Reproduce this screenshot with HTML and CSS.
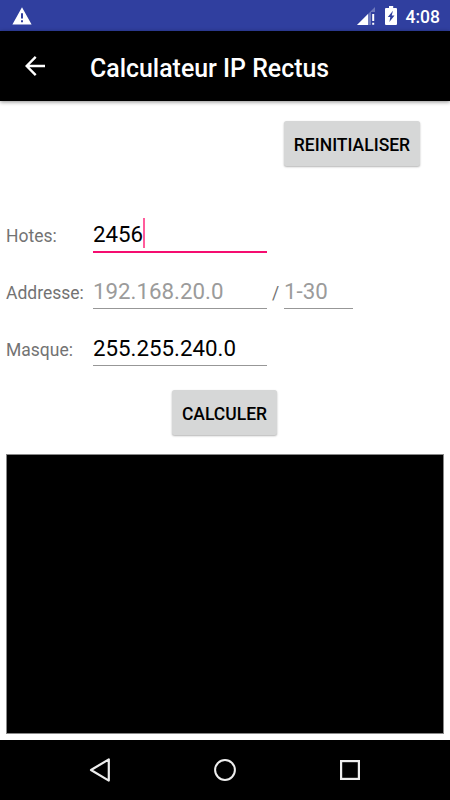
FILE: index.html
```html
<!DOCTYPE html>
<html lang="fr">
<head>
  <meta charset="UTF-8">
  <meta name="viewport" content="width=device-width, initial-scale=1.0">
  <title>Calculateur IP Rectus</title>
  <link rel="stylesheet" href="styles.css">
</head>
<body>
  <div class="statusbar">
    <svg class="warn" width="20" height="18" viewBox="0 0 20 18">
      <path fill="#fff" fill-rule="evenodd" d="M10 0.3 L19.6 17.6 H0.4 Z M9 6.2 V11.6 H11 V6.2 Z M9 13.3 V15.3 H11 V13.3 Z"/>
    </svg>
    <div class="status-right">
      <svg class="signal" width="19" height="18" viewBox="0 0 19 18">
        <path fill="#fff" fill-opacity="0.3" d="M18 0 V5 H14 V18 H0 Z"/>
        <path fill="#fff" d="M11 7 V18 H0 Z"/>
        <path fill="#fff" d="M15.2 7 H17.2 V14 H15.2 Z M15.2 15.7 H17.2 V17.7 H15.2 Z"/>
      </svg>
      <svg class="battery" width="12" height="19" viewBox="0 0 12 19">
        <path fill="#fff" d="M4 0 H8.2 V2 H11 Q12 2 12 3 V18 Q12 19 11 19 H1 Q0 19 0 18 V3 Q0 2 1 2 H4 Z"/>
        <path fill="#303f9f" d="M8 4.7 L2.8 11 H5.3 L4.4 16 L9.5 9.4 H6.7 Z"/>
      </svg>
      <span class="clock">4:08</span>
    </div>
  </div>

  <header class="toolbar">
    <svg class="back" width="20" height="20" viewBox="0 0 20 20">
      <path fill="none" stroke="#fff" stroke-width="2.4" d="M20 10 H2 M10.7 0.9 L1.7 10 L10.7 19.1"/>
    </svg>
    <h1>Calculateur IP Rectus</h1>
  </header>

  <main class="content">
    <button class="btn btn-reset">REINITIALISER</button>

    <div class="form">
      <div class="row first">
        <label>Hotes:</label>
        <div class="field focus">2456<i class="caret"></i></div>
      </div>
      <div class="row">
        <label>Addresse:</label>
        <div class="field hint">192.168.20.0</div>
        <span class="slash">/</span>
        <div class="field hint small">1-30</div>
      </div>
      <div class="row">
        <label>Masque:</label>
        <div class="field">255.255.240.0</div>
      </div>
    </div>

    <button class="btn btn-calc">CALCULER</button>
    <div class="result"></div>
  </main>

  <nav class="navbar">
    <svg width="22" height="26" viewBox="0 0 22 26">
      <path fill="none" stroke="#eee" stroke-width="2.2" stroke-linejoin="round" d="M19.8 2.4 V23.6 L2 13 Z"/>
    </svg>
    <svg width="22" height="26" viewBox="0 0 22 26">
      <circle cx="11" cy="13" r="9.9" fill="none" stroke="#eee" stroke-width="2"/>
    </svg>
    <svg width="22" height="26" viewBox="0 0 22 26">
      <rect x="2.1" y="4.1" width="17.8" height="17.8" fill="none" stroke="#eee" stroke-width="2.2"/>
    </svg>
  </nav>
</body>
</html>
```

FILE: styles.css
```css
* {
  box-sizing: border-box;
}

body {
  margin: 0;
  width: 450px;
  height: 800px;
  display: flex;
  flex-direction: column;
  background: #fff;
  font-family: Roboto, sans-serif;
  overflow: hidden;
}

.statusbar {
  height: 31px;
  flex: none;
  display: flex;
  justify-content: space-between;
  align-items: flex-start;
  padding: 7px 10px 0 12px;
  background: #303f9f;
}

.status-right {
  display: flex;
}

.battery {
  margin: -1px 9px 0 9px;
}

.clock {
  color: #fff;
  font-size: 17.5px;
  font-weight: 500;
  line-height: 20px;
}

.toolbar {
  height: 70px;
  flex: none;
  display: flex;
  align-items: center;
  padding-left: 25px;
  background: #000;
  box-shadow: 0 1px 4px rgba(0, 0, 0, 0.45);
}

.toolbar h1 {
  margin: 6px 0 0 45px;
  color: #fff;
  font-size: 24.9px;
  font-weight: 500;
  line-height: 30px;
}

.content {
  flex: 1;
  display: flex;
  flex-direction: column;
  padding: 20px 6px 6px;
}

.btn {
  height: 45px;
  flex: none;
  padding: 2px 0 0;
  border: 0;
  border-radius: 2.5px;
  background: #d6d7d7;
  box-shadow: 0 1px 2px rgba(0, 0, 0, 0.3);
  color: #000;
  font-family: inherit;
  font-size: 17.5px;
  font-weight: 500;
}

.btn-reset {
  width: 136px;
  align-self: flex-end;
  margin-right: 24px;
}

.btn-calc {
  width: 105px;
  align-self: center;
  margin: 24px 1px 19px 0;
}

.form {
  margin-top: 30px;
}

.row {
  height: 57px;
  display: flex;
  align-items: flex-end;
}

.row.first {
  margin-bottom: -1px;
}

label {
  width: 87px;
  padding: 0 0 6px;
  color: #737373;
  font-size: 17.5px;
  line-height: 20px;
}

.first label {
  padding-bottom: 7px;
}

.field {
  width: 174px;
  height: 36px;
  position: relative;
  border-bottom: 1px solid #979797;
  color: #000;
  font-size: 22.3px;
  line-height: 36px;
}

.field.focus {
  height: 37px;
  border-bottom: 2px solid #f50d70;
}

.field.hint {
  color: #9b9b9b;
}

.field.small {
  width: 69px;
}

.caret {
  position: absolute;
  left: 50px;
  top: 2px;
  width: 2px;
  height: 30px;
  background: #ff5c9c;
}

.slash {
  width: 17px;
  padding: 0 0 6px 5px;
  color: #737373;
  font-size: 17.5px;
  line-height: 20px;
}

.result {
  flex: 1;
  border: 1px solid #888;
  background: #000;
}

.navbar {
  height: 60px;
  flex: none;
  display: flex;
  justify-content: space-between;
  align-items: center;
  padding: 0 89px;
  background: #000;
}
```
